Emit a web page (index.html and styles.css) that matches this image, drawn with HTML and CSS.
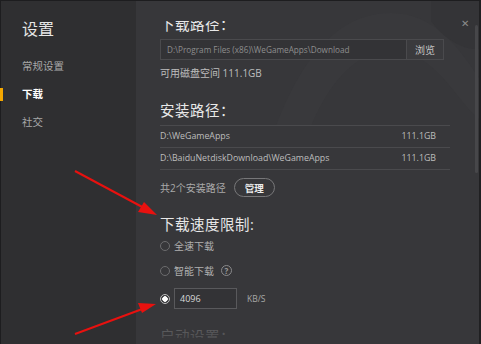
FILE: index.html
```html
<!DOCTYPE html>
<html lang="zh-CN">
<head>
  <meta charset="UTF-8">
  <title>设置 - 下载</title>
  <link rel="stylesheet" href="styles.css">
</head>
<body>
  <div class="window">
    <aside class="sidebar">
      <h1 class="sidebar-title">设置</h1>
      <nav class="menu">
        <a class="menu-item">常规设置</a>
        <a class="menu-item active">下载</a>
        <a class="menu-item">社交</a>
      </nav>
    </aside>

    <main class="panel">
      <svg class="panel-deco" width="345" height="343" viewBox="0 0 345 343">
        <path d="M140 125 C165 60 200 12 255 12 C300 12 325 50 345 80 L345 120 C320 100 300 50 255 50 C215 50 190 90 175 125 Z" fill="#39393c"/>
        <path d="M295 0 L345 0 L345 48 C328 50 308 38 295 20 Z" fill="#343437"/>
      </svg>

      <span class="close">&#x2715;</span>
      <div class="scrollbar"></div>

      <div class="viewport">
        <div class="content">
          <section class="group">
            <h2 class="group-title first">下载路径：</h2>
            <div class="path-field">
              <span class="path-text">D:\Program Files (x86)\WeGameApps\Download</span>
              <button class="browse">浏览</button>
            </div>
            <p class="free-space">可用磁盘空间 111.1GB</p>
          </section>

          <section class="group">
            <h2 class="group-title">安装路径：</h2>
            <ul class="install-list">
              <li><span>D:\WeGameApps</span><span>111.1GB</span></li>
              <li><span>D:\BaiduNetdiskDownload\WeGameApps</span><span>111.1GB</span></li>
            </ul>
            <div class="install-foot">
              <span>共2个安装路径</span>
              <button class="pill">管理</button>
            </div>
          </section>

          <section class="group">
            <h2 class="group-title">下载速度限制:</h2>
            <label class="radio-row"><span class="radio"></span>全速下载</label>
            <label class="radio-row"><span class="radio"></span>智能下载<span class="help">?</span></label>
            <label class="radio-row limit"><span class="radio checked"></span><span class="speed-box">4096</span><span class="unit">KB/S</span></label>
          </section>

          <section class="group">
            <h2 class="group-title dim">启动设置：</h2>
          </section>
        </div>
      </div>
      <div class="fade"></div>
    </main>

    <svg class="arrows" width="481" height="344" viewBox="0 0 481 344">
      <line x1="75" y1="171" x2="146" y2="209" stroke="#e8110f" stroke-width="2"/>
      <polygon points="157,215 138,212 144,202" fill="#e8110f"/>
      <line x1="75" y1="334" x2="145" y2="308" stroke="#e8110f" stroke-width="2"/>
      <polygon points="156,304 142,313 138,303" fill="#e8110f"/>
    </svg>
  </div>
</body>
</html>
```

FILE: styles.css
```css
* {
  box-sizing: border-box;
}

body {
  margin: 0;
  background: #1c1c1e;
  font-family: "Open Sans", "Noto Sans CJK SC", sans-serif;
  overflow: hidden;
}

.window {
  position: relative;
  display: flex;
  width: 481px;
  height: 344px;
  border-top: 1px solid #1d1d1f;
  border-left: 1px solid #1d1d1f;
  border-right: 2px solid #202022;
}

.sidebar {
  width: 135px;
  background: #2f2f31;
  padding: 18px 0 0 0;
}

.sidebar-title {
  margin: 0 0 13px 21px;
  font-size: 16px;
  font-weight: normal;
  color: #e6e6e6;
  line-height: 20px;
}

.menu {
  display: flex;
  flex-direction: column;
}

.menu-item {
  position: relative;
  padding-left: 21px;
  height: 28px;
  line-height: 28px;
  font-size: 10.5px;
  color: #a8a8a8;
}

.menu-item.active {
  color: #fff;
  font-weight: bold;
}

.menu-item.active::before {
  content: "";
  position: absolute;
  left: -1px;
  top: 8px;
  width: 3px;
  height: 13px;
  background: #f4a700;
}

.panel {
  position: relative;
  flex: 1;
  background: #37373a;
  overflow: hidden;
}

.panel-deco {
  position: absolute;
  left: 0;
  top: 0;
}

.close {
  position: absolute;
  right: 10px;
  top: 15px;
  font-size: 10px;
  color: #8c8c8c;
  z-index: 2;
}

.scrollbar {
  position: absolute;
  right: 1px;
  top: 24px;
  width: 3px;
  height: 148px;
  background: #47474a;
  border-radius: 2px;
  z-index: 2;
}

.viewport {
  position: relative;
  margin-top: 20px;
  height: 317px;
  overflow: hidden;
}

.content {
  padding: 0 28px 0 24px;
}

.group-title {
  margin: 0;
  font-size: 14.5px;
  font-weight: normal;
  color: #e8e8e8;
  line-height: 20px;
  letter-spacing: 0.5px;
}

.group-title.first {
  margin-top: -6px;
}

.group-title.dim {
  color: #6a6a6c;
  margin-top: 18px;
}

.path-field {
  display: flex;
  height: 21px;
  margin-top: 4px;
  width: 284px;
  border: 1px solid #4a4a4d;
  background: #333336;
}

.path-text {
  flex: 1;
  padding-left: 6px;
  font-size: 8.2px;
  line-height: 19px;
  color: #8e8e8e;
}

.browse {
  width: 37px;
  border: 0;
  border-left: 1px solid #4a4a4d;
  background: #3a3a3d;
  color: #c4c4c4;
  font-family: inherit;
  font-size: 10px;
  padding: 0;
}

.free-space {
  margin: 5px 0 0 0;
  font-size: 10px;
  line-height: 16px;
  color: #bdbdbd;
}

.group:nth-child(2) {
  margin-top: 20px;
}

.install-list {
  list-style: none;
  margin: 4px 0 0 0;
  padding: 0;
  width: 290px;
  border-top: 1px solid #4a4a4d;
}

.install-list li {
  display: flex;
  justify-content: space-between;
  height: 22px;
  line-height: 21px;
  padding-right: 14px;
  border-bottom: 1px solid #4a4a4d;
  font-size: 8.8px;
  color: #bdbdbd;
}

.install-foot {
  display: flex;
  align-items: center;
  gap: 8px;
  margin-top: 8px;
  font-size: 10px;
  color: #a9a9a9;
}

.pill {
  width: 41px;
  height: 19px;
  border: 1px solid #777779;
  border-radius: 10px;
  background: transparent;
  color: #ededed;
  font-family: inherit;
  font-size: 9.5px;
  font-weight: bold;
  padding: 0;
}

.group:nth-child(3) {
  margin-top: 18px;
}

.radio-row {
  display: flex;
  align-items: center;
  height: 25px;
  font-size: 10px;
  color: #b0b0b0;
}

.group-title + .radio-row {
  margin-top: -2px;
}

.radio {
  width: 10px;
  height: 10px;
  border: 1px solid #6c6c6e;
  border-radius: 50%;
  margin: 0 4px 0 0;
}

.radio.checked {
  border-color: #bcbcbc;
  background: radial-gradient(circle, #ffffff 0 2.5px, transparent 3px);
}

.help {
  display: inline-flex;
  justify-content: center;
  align-items: center;
  width: 11px;
  height: 11px;
  margin-left: 7px;
  border: 1px solid #8a8a8c;
  border-radius: 50%;
  font-size: 8px;
  font-weight: bold;
  color: #9a9a9a;
}

.radio-row.limit {
  height: 21px;
  margin-top: 5px;
}

.speed-box {
  width: 63px;
  height: 21px;
  border: 1px solid #59595c;
  background: #333336;
  padding-left: 5px;
  font-size: 9px;
  line-height: 19px;
  color: #d8d8d8;
}

.unit {
  margin-left: 10px;
  font-size: 8.5px;
  color: #a8a8a8;
}

.fade {
  position: absolute;
  left: 0;
  right: 0;
  bottom: 0;
  height: 24px;
  background: linear-gradient(rgba(55, 55, 58, 0), rgba(55, 55, 58, 0.7));
}

.arrows {
  position: absolute;
  left: -1px;
  top: -1px;
  pointer-events: none;
}
```
